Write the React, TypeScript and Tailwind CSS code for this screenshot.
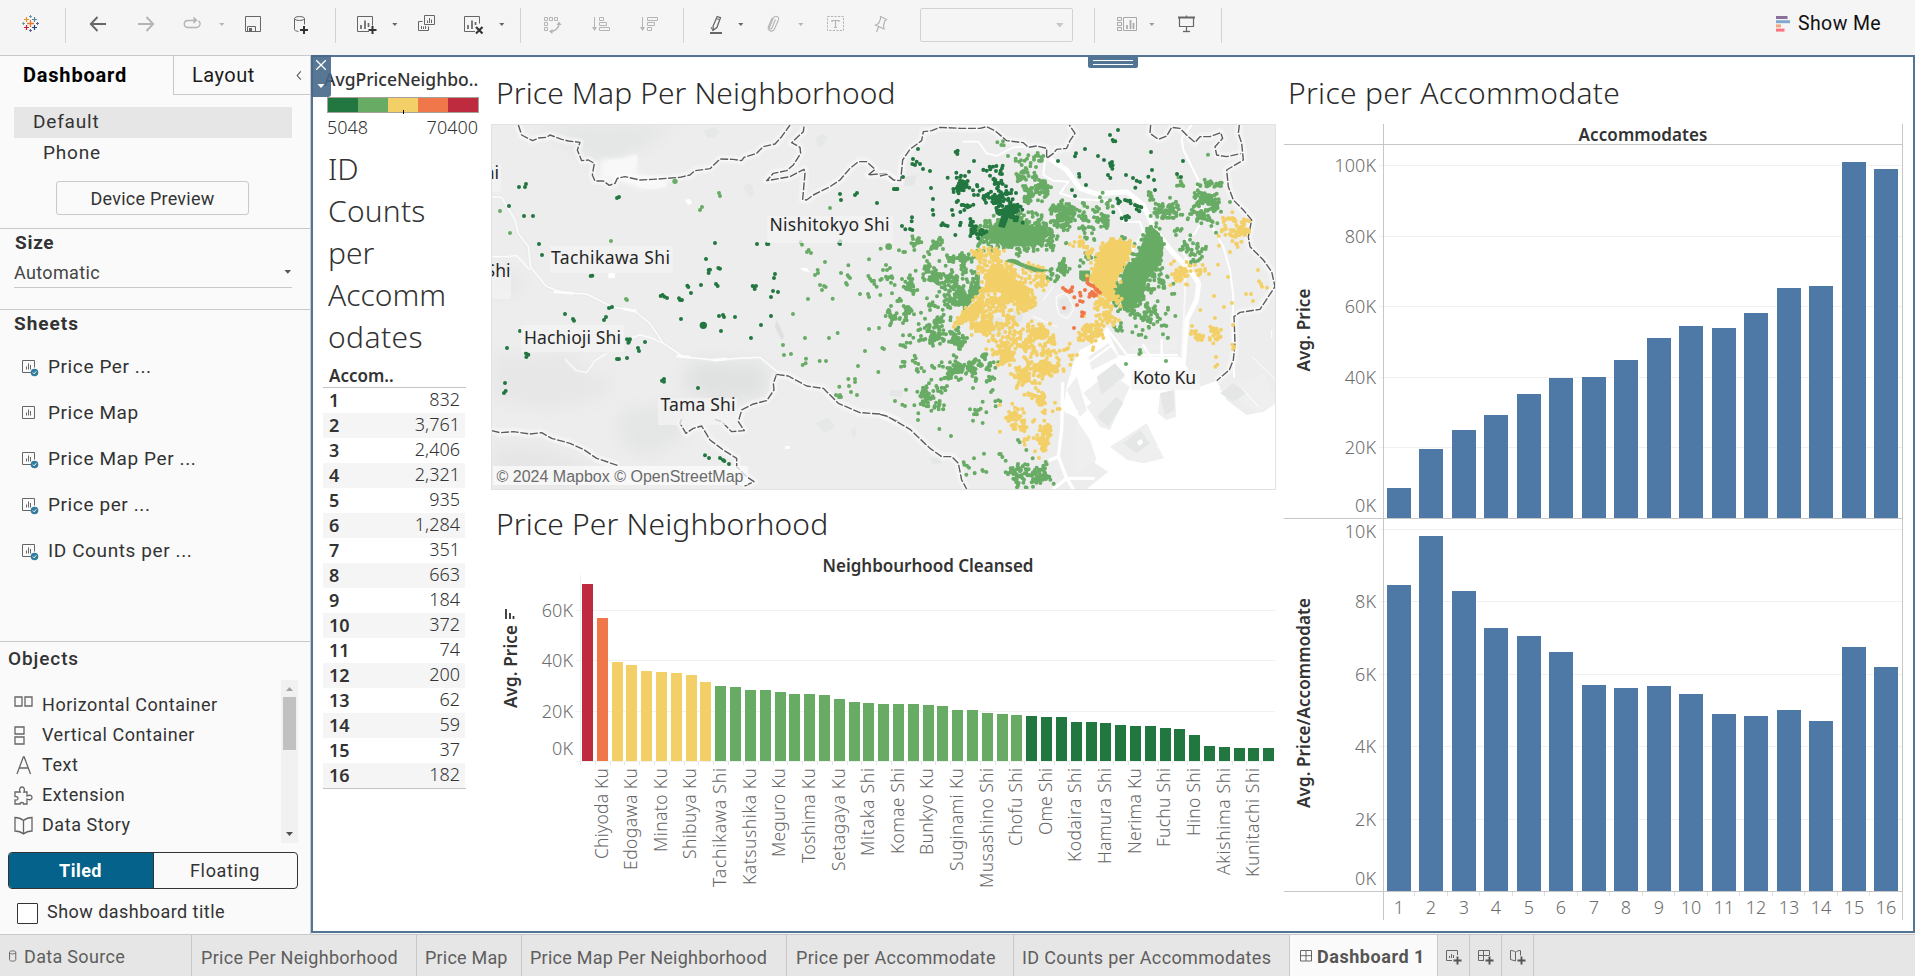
import React from "react";

const DARK = "#22763f";
const GREEN = "#68ab65";
const YELLOW = "#f3d067";
const ORANGE = "#f0774a";
const RED = "#be2a3e";
const BLUE = "#4e79a7";

/* ---------- toolbar ---------- */

function Icon({ className = "", children, color = "#666" }: { className?: string; children: React.ReactNode; color?: string }) {
  return (
    <svg viewBox="0 0 24 24" className={`h-6 w-6 shrink-0 ${className}`} fill="none" stroke={color} strokeWidth="1">
      {children}
    </svg>
  );
}

function Caret({ className = "", color = "#666" }: { className?: string; color?: string }) {
  return (
    <svg viewBox="0 0 8 24" className={`h-6 w-2 shrink-0 ${className}`}>
      <path d="M1.2 11h5.2L3.8 14z" fill={color} />
    </svg>
  );
}

function Sep({ className = "" }: { className?: string }) {
  return <div className={`mt-[3px] h-[35px] w-px shrink-0 bg-[#d2d2d2] ${className}`} />;
}

const LIGHT = "#b4b4b4";

function Toolbar() {
  return (
    <header className="flex h-[55px] w-full items-start bg-[#f5f5f5]">
      <div className="flex h-12 grow items-center">
        <Icon className="ml-[18px]">
          <path d="M12.500 8v7M9 11.500h7" stroke="#e8762c" strokeWidth="1.300" />
          <path d="M8.500 5v5M6 7.500h5" stroke="#eb912b" strokeWidth="1.200" />
          <path d="M16.500 5v5M14 7.500h5" stroke="#59879b" strokeWidth="1.200" />
          <path d="M8.500 13v5M6 15.500h5" stroke="#c72035" strokeWidth="1.200" />
          <path d="M16.500 13v5M14 15.500h5" stroke="#1f457e" strokeWidth="1.200" />
          <path d="M12.500 3v3M11 4.500h3M5.500 10v3M4 11.500h3" stroke="#7099a6" />
          <path d="M12.500 17v3M11 18.500h3M19.500 10v3M18 11.500h3" stroke="#5b6591" />
        </Icon>
        <Sep className="ml-[23px]" />
        <Icon className="ml-5"><path d="M20 12H5M11.500 5L4.800 12l6.700 7" strokeWidth="1.900" /></Icon>
        <Icon className="ml-6" color={LIGHT}><path d="M4 12h15M12.500 5l6.700 7-6.700 7" strokeWidth="1.900" /></Icon>
        <Icon className="ml-[22px]" color={LIGHT}>
          <path d="M14 8.500H7a3.600 3.600 0 0 0 0 7h10a3.600 3.600 0 0 0 1.400-6.600" strokeWidth="1.300" />
          <path d="M13.500 4.500v7.500l4-3.800z" fill={LIGHT} stroke="none" />
        </Icon>
        <Caret className="ml-[14px]" color={LIGHT} />
        <Icon className="ml-[15px]">
          <path d="M4.500 4.500h15v15h-15z" />
          <path d="M6.500 19.500v-5h8v5" />
          <path d="M8 16h3v3H8z" fill="#666" stroke="none" />
        </Icon>
        <Icon className="ml-6">
          <ellipse cx="10.500" cy="6.500" rx="5" ry="2" />
          <path d="M5.500 6.500v11c0 1 1.500 1.600 4 1.900M15.500 6.500v6" />
          <path d="M15 14v8M11 18h8" stroke="#333" strokeWidth="2" />
        </Icon>
        <Sep className="ml-[22px]" />
        <Icon className="ml-[18px]">
          <path d="M15 19.500H3.500v-15h15v9" />
          <path d="M7 17v-4M11 17V8.500M14.500 15v-4" strokeWidth="1.700" />
          <path d="M18.500 14v8M14.500 18h8" stroke="#333" strokeWidth="2" />
        </Icon>
        <Caret className="ml-[13px]" />
        <Icon className="ml-[15px]">
          <path d="M10.500 3.500h10v9h-10z" />
          <path d="M8.500 9.500h-4v9h10v-4" />
          <path d="M13.500 11V8.500M15.500 11V6M17.500 11V7.500M7.500 17v-3M9.500 17v-2.500M11.500 17v-3" />
        </Icon>
        <Icon className="ml-6">
          <path d="M13 19.500H2.500v-15h15v7" />
          <path d="M6 17v-4M10 17V8.500M13.500 13v-3" strokeWidth="1.700" />
          <path d="M14 15l6.500 6.500M20.500 15L14 21.500" stroke="#333" strokeWidth="2.100" />
        </Icon>
        <Caret className="ml-3" />
        <Sep className="ml-[14px]" />
        <Icon className="ml-[19px]" color={LIGHT}>
          <path d="M4.500 5.500h3v3h-3zM9.500 5.500h3v3h-3zM14.500 5.500h3v3h-3zM4.500 10.500h3v3h-3zM4.500 15.500h3v3h-3z" />
          <path d="M19 11.500c0 4-3 7.500-8 8" strokeWidth="1.400" />
          <path d="M16.500 13l2.500-3.500 2.500 3.500zM12.500 17l-3.500 2.500 3.500 2.500z" fill={LIGHT} stroke="none" />
        </Icon>
        <Icon className="ml-6" color={LIGHT}>
          <path d="M6.500 5v12" />
          <path d="M4 15h5l-2.500 4z" fill={LIGHT} stroke="none" />
          <path d="M11.500 5.500h4v3h-4zM11.500 10.500h7v3h-7zM11.500 15.500h10v3h-10z" />
        </Icon>
        <Icon className="ml-[25px]" color={LIGHT}>
          <path d="M5.500 5v12" />
          <path d="M3 15h5l-2.500 4z" fill={LIGHT} stroke="none" />
          <path d="M10.500 5.500h10v3h-10zM10.500 10.500h7v3h-7zM10.500 15.500h4v3h-4z" />
        </Icon>
        <Sep className="ml-[22px]" />
        <Icon className="ml-5">
          <path d="M13.200 4.500l3.300 1.200-3.600 9.800-3.600 2.500-.2-4z" strokeWidth="1.300" />
          <path d="M12.300 6.500l3.300 1.200" />
          <path d="M7 15l2 4" />
          <path d="M6 21h12" strokeWidth="2" />
        </Icon>
        <Caret className="ml-[9px]" />
        <Icon className="ml-4" color={LIGHT}>
          <path d="M14.500 7.500l-3.600 8.500c-.8 1.800-3 1-2.300-.9l3.700-9c1.500-3.300 6.300-1.700 5.200 1.600l-4 9.300c-1.700 3.600-7.500 2.200-6-2.500l3.700-8.500" strokeWidth="1.100" />
        </Icon>
        <Caret className="ml-3" color={LIGHT} />
        <Icon className="ml-[19px]" color={LIGHT}>
          <path d="M3.500 4.500h16v14h-16z" strokeDasharray="2.200 1.300" />
          <path d="M8 10V8.500h7V10M11.500 8.500v7M10 15.500h3" strokeWidth="1.200" />
        </Icon>
        <Icon className="ml-[21px]" color={LIGHT}>
          <path d="M11.500 4.500l6 3-1.500 1-1.500 5 .5 3.500-8.500-4 3-1.500 2-4.500zM9.500 15l-2 5" strokeWidth="1.200" />
        </Icon>
        <div className="ml-[27px] mt-[2px] flex h-[34px] w-[153px] shrink-0 items-center justify-end rounded-[2px] border border-[#d2d2d2] pr-2">
          <svg viewBox="0 0 8 6" className="h-[6px] w-2"><path d="M0 1h7.500L3.800 5.500z" fill="#c8c8c8" /></svg>
        </div>
        <Sep className="ml-[21px]" />
        <Icon className="ml-5" color="#a8a8a8">
          <path d="M2.500 5.500h4v3h-4zM2.500 10.500h4v3h-4zM2.500 15.500h4v3h-4zM8.500 5.500h13v13h-13z" />
          <path d="M12 17v-4M15.500 17V8M18.500 17v-6" strokeWidth="1.700" />
        </Icon>
        <Caret className="ml-[9px]" color="#999" />
        <Icon className="ml-[19px]">
          <path d="M3 5.500h17" strokeWidth="2" />
          <path d="M4.500 6v8.500h14V6M11.500 14.500v5M11.500 3.500V5" strokeWidth="1.200" />
          <path d="M8 19.500h7" strokeWidth="1.300" />
        </Icon>
        <Sep className="ml-[22px]" />
      </div>
      <button className="flex h-12 w-[139px] items-center gap-[7px]">
        <svg viewBox="0 0 15 16" className="mt-[-1px] h-4 w-[15px]">
          <path d="M0 0h11.500v3H0z" fill="#8a7099" />
          <path d="M0 4.200h14v3H0z" fill="#83a8ce" />
          <path d="M0 8.400h5v3H0z" fill="#f3a77c" />
          <path d="M0 12.600h8.500v3H0z" fill="#fb737e" />
        </svg>
        <span className="text-[19.500px] font-normal tracking-[0.4px] text-[#111]">Show Me</span>
      </button>
    </header>
  );
}

/* ---------- sidebar ---------- */

function SheetIcon({ used }: { used: boolean }) {
  return (
    <svg viewBox="0 0 18 18" className="h-[18px] w-[18px] shrink-0" fill="none" stroke="#666">
      <path d={used ? "M9 12.500H.5V.5h12v7" : "M.5.5h12v12H.5z"} />
      <path d="M4.500 9.500V6.500M6.500 9.500V3.500M8.500 9.500V5" />
      {used && (
        <g>
          <circle cx="12.500" cy="12.500" r="3.800" fill="#317b9d" stroke="none" />
          <path d="M10.800 12.500l1.300 1.300 2.100-2.500" stroke="#fff" />
        </g>
      )}
    </svg>
  );
}

const SHEETS = [
  { name: "Price Per ...", used: true },
  { name: "Price Map", used: false },
  { name: "Price Map Per ...", used: true },
  { name: "Price per ...", used: true },
  { name: "ID Counts per ...", used: true },
];

const OBJECTS: { name: string; icon: React.ReactNode }[] = [
  { name: "Horizontal Container", icon: <path d="M1 1h7v9H1zM11 1h7v9h-7z" /> },
  { name: "Vertical Container", icon: <path d="M1 1h9v7H1zM1 11h9v7H1z" /> },
  { name: "Text", icon: <path d="M3 18L9.300 1h.9L16.500 18M5.300 12h9" /> },
  {
    name: "Extension",
    icon: (
      <path d="M1 8.500V6h5.200c-1.200-2-.6-5 1.800-5s3 3 1.800 5H13v4c3-1.500 5-.5 5 1.500s-2 3-5 1.500V18H9.500c.5-2-4-2-3.500 0H1v-4c4 .8 4-4 0-3.500z" />
    ),
  },
  { name: "Data Story", icon: <path d="M1 1.500c3 0 5.500.5 8.500 3 3-2.500 5.500-3 8.500-3v13.500c-3 0-5.500.5-8.500 3-3-2.500-5.500-3-8.500-3zM9.500 4.500V18" /> },
];

function Sidebar() {
  return (
    <aside className="flex w-[311px] shrink-0 flex-col border-r border-t border-[#c9c9c9] bg-[#fafafa] text-[#333]">
      <div className="flex h-[39px]">
        <div className="flex h-[37px] w-[173px] items-center pl-[23px] text-[20px] font-bold tracking-[0.8px] text-black">Dashboard</div>
        <div className="flex grow items-center justify-between border-b border-l border-[#c9c9c9] pl-[18px] pr-2 text-[20px] tracking-[0.5px] text-[#1a1a1a]">
          Layout
          <svg viewBox="0 0 6 10" className="h-[9px] w-[6px]" fill="none" stroke="#555" strokeWidth="1.200"><path d="M5 .5L1 5l4 4.500" /></svg>
        </div>
      </div>
      <div className="ml-[14px] mt-3 flex h-[31px] w-[278px] items-center bg-[#e6e6e6] pl-[19px] text-[19px] tracking-[0.8px]">Default</div>
      <div className="flex h-8 items-center pb-[2px] pl-[43px] text-[19px] tracking-[0.8px]">Phone</div>
      <button className="ml-14 mt-[11px] flex h-[34px] w-[193px] items-center justify-center rounded-[3px] border border-[#c9c9c9] text-[18px] tracking-[0.24px]">
        Device Preview
      </button>
      <section className="mt-[13px] flex h-[81px] flex-col border-t border-[#c9c9c9]">
        <h2 className="h-[29px] pl-[15px] text-[19px] font-bold leading-[27px] tracking-[0.7px]">Size</h2>
        <div className="ml-[14px] flex h-[30px] w-[278px] items-center justify-between border-b border-[#c9c9c9] pb-[1px] text-[18px] tracking-[0.35px] text-[#444]">
          Automatic
          <svg viewBox="0 0 8 4" className="h-1 w-[8px]"><path d="M.5 0h6.500L3.800 3.800z" fill="#555" /></svg>
        </div>
      </section>
      <section className="flex h-[332px] flex-col border-t border-[#c9c9c9]">
        <h2 className="h-[34px] pl-[14px] text-[19px] font-bold leading-[28px] tracking-[1px]">Sheets</h2>
        {SHEETS.map((s) => (
          <div key={s.name} className="flex h-[46px] items-center gap-2 pl-[22px] text-[19px] tracking-[0.6px]">
            <span className="mt-[3px]"><SheetIcon used={s.used} /></span>
            {s.name}
          </div>
        ))}
      </section>
      <section className="flex flex-col border-t border-[#c9c9c9]">
        <h2 className="h-[38px] pl-2 text-[19px] font-medium leading-[33px] tracking-[0.9px]">Objects</h2>
        <div className="flex h-[163px]">
          <ul className="w-[281px] pt-[10px]">
            {OBJECTS.map((o) => (
              <li key={o.name} className="flex h-[30px] items-center gap-[9px] pl-[14px] text-[18px] tracking-[0.55px]">
                <svg viewBox="0 0 19 19" className="h-[19px] w-[19px]" fill="none" stroke="#666" strokeWidth="1.300">{o.icon}</svg>
                <span className="pb-[2px]">{o.name}</span>
              </li>
            ))}
          </ul>
          <div className="flex w-[17px] flex-col items-center bg-[#f1f1f1]">
            <svg viewBox="0 0 17 17" className="h-[17px] w-[17px]"><path d="M5 11h7L8.500 7z" fill="#a3a3a3" /></svg>
            <div className="h-[53px] w-[13px] bg-[#c1c1c1]" />
            <svg viewBox="0 0 17 17" className="mt-auto h-[17px] w-[17px]"><path d="M5 6h7l-3.500 4z" fill="#505050" /></svg>
          </div>
        </div>
      </section>
      <div className="ml-2 mt-[9px] flex h-[37px] w-[290px] overflow-hidden rounded-[4px] border border-[#333] text-[18px]">
        <div className="m-[-1px] flex w-[146px] items-center justify-center border-r border-[#333] bg-[#05628a] font-bold tracking-[0.49px] text-white">Tiled</div>
        <div className="flex grow items-center justify-center tracking-[0.66px]">Floating</div>
      </div>
      <label className="ml-[17px] mt-[14px] flex items-center gap-[9px] text-[18px] tracking-[0.46px]">
        <span className="h-[21px] w-[21px] rounded-[1px] border border-[#333] bg-white" />
        <span className="-mt-[4px] leading-[21px]">Show dashboard title</span>
      </label>
    </aside>
  );
}

/* ---------- legend and counts table ---------- */

const COUNTS = ["832", "3,761", "2,406", "2,321", "935", "1,284", "351", "663", "184", "372", "74", "200", "62", "59", "37", "182"];

function CountsPanel() {
  return (
    <div className="flex w-[178px] shrink-0 flex-col font-['Noto_Sans',sans-serif] text-[#333]">
      <div className="mt-[12px] h-[28px] whitespace-nowrap pl-[11px] text-[17.500px] font-medium leading-[21px]">AvgPriceNeighbo..</div>
      <div className="relative ml-[14px] flex h-[16px] w-[152px] border border-[#a8a29a]">
        <div className="grow bg-[#22763f]" />
        <div className="grow bg-[#68ab65]" />
        <div className="grow bg-[#f3d067]" />
        <div className="grow bg-[#f0774a]" />
        <div className="grow bg-[#be2a3e]" />
        <div className="absolute left-[75px] top-[12px] h-[4px] w-px bg-black" />
      </div>
      <div className="flex h-[33px] justify-between pl-[14px] pr-[13px] text-[18px] font-light leading-[29px]">
        <span>5048</span>
        <span>70400</span>
      </div>
      <h2 className="w-[150px] pl-[15px] pt-[2px] text-[30px] font-light leading-[42px]">
        ID<br />
        <span className="tracking-[0.2px]">Counts</span><br />
        per<br />
        Accomm<br />
        <span className="tracking-[0.4px]">odates</span>
      </h2>
      <div className="ml-[10px] mt-[6px] flex w-[143px] flex-col border-b border-[#c4c4c4]">
        <div className="h-[24px] border-b border-[#c4c4c4] pl-[6px] text-[17px] font-semibold leading-[23px]">Accom..</div>
        {COUNTS.map((v, i) => (
          <div key={i} className={`flex h-[25px] w-[142px] items-center justify-between pl-[6px] pr-[5px] text-[18px] leading-[24px] ${i % 2 ? "bg-[#f5f5f5]" : ""}`}>
            <span className="pb-[1px] text-[18px] font-semibold">{i + 1}</span>
            <span className="pb-[3px] font-light">{v}</span>
          </div>
        ))}
      </div>
    </div>
  );
}

/* ---------- map ---------- */

function lcg(seed: number) {
  let s = seed;
  return () => {
    s = (s * 1664525 + 1013904223) % 4294967296;
    return s / 4294967296;
  };
}

function inside(poly: number[], x: number, y: number) {
  let hit = false;
  for (let i = 0, j = poly.length - 2; i < poly.length; j = i, i += 2) {
    const [xi, yi, xj, yj] = [poly[i], poly[i + 1], poly[j], poly[j + 1]];
    if (yi > y !== yj > y && x < ((xj - xi) * (y - yi)) / (yj - yi) + xi) hit = !hit;
  }
  return hit;
}

/* Random points inside a polygon; `clump` is the share of points that sit next to an earlier one. */
function scatter(poly: number[], n: number, clump: number, seed: number) {
  const r = lcg(seed);
  const xs = poly.filter((_, i) => i % 2 === 0);
  const ys = poly.filter((_, i) => i % 2 === 1);
  const [x0, x1, y0, y1] = [Math.min(...xs), Math.max(...xs), Math.min(...ys), Math.max(...ys)];
  const pts: [number, number][] = [];
  let guard = 0;
  while (pts.length < n && guard++ < n * 20) {
    let x: number, y: number;
    if (pts.length > 3 && r() < clump) {
      const p = pts[Math.floor(r() * pts.length)];
      x = p[0] + (r() + r() - 1) * 20;
      y = p[1] + (r() + r() - 1) * 20;
    } else {
      x = x0 + r() * (x1 - x0);
      y = y0 + r() * (y1 - y0);
      if (!inside(poly, x, y)) continue;
    }
    pts.push([Math.round(x), Math.round(y)]);
  }
  return pts.map(([x, y]) => `M${x} ${y}h0`).join("");
}

/* Points jittered along a polygon's outline, which roughens the edge of a dense area. */
function fringe(poly: number[], step: number, spread: number, seed: number) {
  const r = lcg(seed);
  let d = "";
  for (let i = 0; i < poly.length; i += 2) {
    const j = (i + 2) % poly.length;
    const len = Math.hypot(poly[j] - poly[i], poly[j + 1] - poly[i + 1]);
    for (let t = 0; t < len; t += step) {
      const x = poly[i] + ((poly[j] - poly[i]) * t) / len + (r() + r() - 1) * spread;
      const y = poly[i + 1] + ((poly[j + 1] - poly[i + 1]) * t) / len + (r() + r() - 1) * spread;
      d += `M${Math.round(x)} ${Math.round(y)}h0`;
    }
  }
  return d;
}

function dots(list: number[]) {
  let d = "";
  for (let i = 0; i < list.length; i += 2) d += `M${list[i]} ${list[i + 1]}h0`;
  return d;
}

const WEST_DARK = [
  117, 231, 138, 222, 135, 231, 87, 288, 132, 318, 159, 318, 177, 402, 186, 435, 411, 264, 417, 261, 332, 498, 337, 497, 705, 399, 831, 402, 861, 402, 865, 402,
  678, 447, 686, 480, 690, 479, 686, 489, 715, 474, 720, 476, 885, 492, 882, 504, 663, 525, 708, 522, 713, 528, 622, 527, 625, 531, 633, 549, 818, 528, 828, 528, 824, 537,
  879, 543, 894, 546, 873, 561, 542, 558, 548, 555, 553, 560, 561, 564, 597, 565, 600, 570, 606, 570, 387, 594, 396, 591, 255, 612, 279, 627, 282, 632, 378, 621, 372, 630, 603, 627,
  717, 618, 729, 615, 732, 621, 765, 621, 873, 618, 843, 645, 813, 684, 723, 663, 120, 663, 81, 714, 138, 730, 145, 734, 139, 741, 441, 688, 447, 695, 450, 688, 445, 698, 495, 696, 474, 714,
  477, 723, 411, 747, 417, 747, 441, 744, 75, 819, 72, 849, 77, 843, 546, 812, 552, 807, 552, 815, 654, 834, 675, 1036, 687, 1044, 720, 1044, 729, 1050, 733, 1053, 747, 1062,
  1080, 252, 1083, 270, 1131, 249, 1125, 255, 1191, 279, 1243, 237, 1251, 237, 1081, 394, 1080, 402, 1077, 398,
];
const WEST_GREEN = [
  60, 303, 90, 369, 393, 393, 438, 567, 441, 570, 717, 249, 720, 258, 666, 291, 660, 300, 1050, 294, 962, 396, 966, 404, 981, 426, 986, 420, 993, 429, 1035, 456, 1013, 480, 1014, 489,
  1005, 495, 1020, 525, 1032, 528, 1037, 531, 1026, 540, 984, 567, 1058, 566, 1105, 466, 1083, 489, 1106, 500, 1101, 524, 1098, 519, 1110, 504, 1103, 496, 1167, 448, 1165, 498, 1170, 506, 1175, 513, 1183, 522, 1190, 530,
  1182, 512, 1140, 552, 1164, 552, 1167, 561, 1201, 555, 939, 612, 1073, 669, 1047, 684, 975, 684, 909, 705, 912, 735, 933, 732, 978, 746, 977, 760, 968, 765, 1019, 753, 1038, 753, 1167, 657, 1197, 654,
  1155, 723, 1207, 714, 1212, 717, 1134, 768, 1195, 786, 1105, 807, 1125, 807, 1125, 816, 1107, 828, 1078, 830, 1113, 846, 1068, 855, 1080, 855, 1077, 861, 1083, 861, 1131, 855, 1245, 873,
  1233, 588, 1228, 604, 1230, 611, 1236, 630, 1233, 640, 1218, 465, 1230, 474, 1221, 480, 1209, 480, 1218, 500, 1228, 502,
];
const EAST_DARK = [
  114, 117, 99, 147, 105, 165, 120, 162, 97, 162, 110, 155, 129, 177, 150, 183, 69, 201, 227, 126, 233, 122, 232, 132, 282, 153, 153, 234, 159, 267, 158, 300, 160, 314, 42, 237, 52, 237, 96, 322, 95, 334,
  90, 357, 97, 360, 66, 348, 76, 358, 188, 340, 195, 346, 184, 346, 226, 375, 203, 348, 714, 60, 690, 75, 698, 90, 706, 94, 700, 94, 615, 117, 588, 130, 585, 139, 534, 153, 654, 138, 672, 150, 696, 156, 692, 168, 697, 176, 690, 160, 698, 166, 684, 195,
  691, 204, 738, 195, 759, 204, 770, 212, 780, 216, 766, 233, 813, 126, 816, 180, 805, 200, 822, 210, 825, 240, 909, 153, 891, 192, 903, 201, 597, 192, 598, 200, 618, 225, 576, 240, 585, 258,
  712, 266, 716, 272, 720, 275, 735, 270, 742, 272, 750, 272, 715, 280, 752, 280, 765, 285, 772, 288, 780, 290, 784, 292, 770, 298, 778, 304, 700, 307, 725, 325, 735, 320, 742, 318, 747, 322, 738, 330, 777, 303,
];
const ORANGE_PTS = [
  549, 534, 556, 540, 560, 543, 568, 546, 572, 540, 577, 532, 575, 543, 583, 562, 600, 548, 602, 557, 615, 540, 622, 508, 622, 518, 626, 522, 632, 525, 640, 528, 646, 536, 650, 541, 655, 545, 660, 548, 640, 550, 630, 552, 648, 555, 600, 573,
  608, 575, 591, 585, 552, 594, 606, 607, 612, 609, 606, 618, 582, 654, 628, 560, 652, 540, 636, 546, 632, 556, 642, 558,
];
const YELLOW_PTS = [
  1057, 307, 1017, 407, 1050, 426, 1014, 464, 1044, 501, 1134, 480, 1137, 514, 1143, 522, 1146, 530, 1161, 533, 1098, 552, 1113, 552, 1119, 573, 1002, 558, 1056, 579, 1032, 591, 961, 600, 1005, 624, 1059, 645,
  936, 648, 1008, 741, 1012, 764, 1006, 770, 1057, 704, 1062, 710, 1059, 717, 873, 462, 882, 454, 945, 465, 968, 465, 987, 492, 612, 618, 640, 712, 638, 720, 591, 735, 360, 885, 360, 965,
  372, 422, 465, 1024, 477, 1044, 490, 1010, 497, 1020, 490, 1022, 606, 398, 612, 410, 600, 405,
];

const BORDERS_WEST = [
  "M115 45L125 75 158 92 175 84 200 82 210 75 245 88 265 93 300 97 292 120 305 152 325 150 343 160 337 195 345 213 370 213 388 226 405 220 412 205 435 200 480 210 520 208 560 205 600 202 630 195 645 182 690 176 720 147 760 148 785 152 792 142 830 130 850 110 885 102 905 80 930 45",
  "M972 50L970 65 935 98 960 112 962 130 940 165 920 182 880 190 860 212 930 200 972 178 975 190 968 268 980 270 1000 255 1050 230 1080 210 1110 175 1135 155 1160 155 1185 178 1165 195 1215 190 1245 210",
  "M35 962L60 968 100 965 150 972 185 968 215 985 270 1000 310 1018 350 1045 415 1067",
  "M890 793L880 820 882 840 860 872 820 882 785 900 775 935 793 962 755 965 725 935 705 928",
  "M605 928L600 940 618 970 640 955 665 948 690 990 730 1020 770 1045 770 1070 800 1100 822 1115 790 1130",
  "M890 793L925 798 980 828 1030 835 1075 880 1140 908 1200 912 1260 935",
];
const BORDERS_EAST = [
  "M0 198L20 193 40 210 62 212 68 150 90 118 125 92 130 65 155 62 180 52 240 55 300 55 320 50 345 62 380 92 430 98 445 112 470 108 500 115 500 145 520 130 530 118 560 115 570 92 585 70 568 45",
  "M812 45L810 70 835 88 860 78 875 52 900 55 925 80 945 97 960 80 990 80 1022 68 1028 85 1005 110 1010 135 1040 140 1085 130",
  "M1078 45L1075 70 1085 100 1090 150 1040 180 1045 230 1060 270 1090 300 1115 330 1105 380 1110 410 1150 450 1175 485 1185 530 1140 598 1080 607 1062 620 1065 700 1060 750 1048 780 1010 812",
  "M0 913L20 918 90 958 150 1015 185 1040 215 1040 235 1060 245 1110 260 1137",
];

function Border({ d }: { d: string }) {
  return (
    <g fill="none" strokeLinejoin="round">
      <path d={d} stroke="#fff" strokeOpacity=".3" strokeWidth="26" />
      <path d={d} stroke="#fff" strokeOpacity=".5" strokeWidth="12" />
      <path d={d} stroke="#5c5c5c" strokeWidth="4.200" strokeDasharray="24 5" />
    </g>
  );
}

const G_POLY = {
  core: [300, 385, 335, 350, 365, 325, 420, 322, 450, 350, 500, 350, 510, 375, 470, 405, 440, 410, 400, 408, 360, 392],
  east: [810, 345, 840, 370, 850, 430, 835, 470, 800, 510, 790, 560, 745, 592, 700, 560, 722, 520, 730, 480, 770, 440, 790, 390],
};
const Y_POLY = {
  north: [690, 388, 755, 395, 752, 430, 728, 470, 712, 510, 690, 550, 665, 560, 655, 535, 628, 510, 645, 460, 655, 430, 672, 405],
  west: [320, 492, 380, 480, 410, 510, 460, 540, 440, 545, 470, 580, 430, 592, 390, 560, 350, 545, 310, 550],
  wedge: [308, 550, 314, 585, 290, 632, 250, 635, 220, 648, 245, 610, 285, 575],
};

function DotLayer({ color, d }: { color: string; d: string }) {
  return <path d={d} stroke={color} strokeWidth="12" strokeLinecap="round" fill="none" />;
}

const GREEN_AREAS = [
  scatter([275, 360, 350, 310, 450, 300, 520, 340, 520, 400, 480, 420, 380, 420, 290, 410], 260, 0.4, 3),
  scatter([405, 130, 490, 125, 495, 200, 510, 240, 550, 290, 600, 300, 590, 350, 520, 340, 450, 310, 430, 240, 410, 180], 190, 0.6, 7),
  scatter([520, 300, 640, 285, 690, 290, 680, 380, 670, 405, 610, 400, 560, 370, 520, 350], 170, 0.7, 11),
  scatter([815, 290, 890, 275, 910, 320, 860, 330, 825, 315], 75, 0.7, 12),
  scatter([860, 390, 900, 340, 940, 290, 990, 240, 1020, 280, 960, 330, 900, 385], 150, 0.75, 13),
  scatter([870, 200, 930, 200, 930, 250, 1000, 170, 1035, 165, 1025, 240, 980, 280, 890, 250], 32, 0.5, 14),
  scatter([920, 390, 980, 400, 975, 460, 940, 455, 915, 430], 42, 0.6, 15),
  scatter([700, 540, 800, 480, 880, 500, 890, 560, 800, 620, 700, 600], 140, 0.65, 16),
  scatter([690, 600, 880, 590, 900, 680, 850, 700, 770, 690, 700, 665], 52, 0.5, 17),
  scatter([205, 430, 300, 420, 305, 520, 250, 600, 200, 580], 180, 0.6, 18),
  scatter([0, 400, 200, 390, 215, 560, 180, 560, 0, 520], 110, 0.75, 19),
  scatter([130, 470, 200, 460, 210, 560, 140, 540], 80, 0.7, 20),
  scatter([0, 540, 230, 540, 200, 700, 20, 720], 85, 0.6, 21),
  scatter([140, 620, 220, 600, 260, 690, 240, 720, 150, 700], 130, 0.7, 22),
  scatter([200, 780, 320, 730, 335, 755, 230, 810, 205, 810], 110, 0.6, 23),
  scatter([40, 740, 380, 760, 400, 860, 350, 900, 330, 1000, 250, 970, 200, 900, 40, 890], 130, 0.75, 24),
  scatter([450, 1060, 500, 1045, 500, 1130, 400, 1137, 400, 1080], 110, 0.7, 25),
  scatter([250, 1000, 480, 980, 470, 1060, 300, 1137, 250, 1100], 26, 0.6, 26),
  scatter([505, 400, 620, 400, 620, 510, 510, 510], 60, 0.8, 27),
  fringe(G_POLY.core, 8, 18, 61),
  fringe(G_POLY.east, 7, 20, 62),
];
const DARK_AREAS = [
  scatter([330, 210, 410, 240, 430, 310, 370, 340, 330, 290], 110, 0.65, 31),
  scatter([195, 170, 260, 200, 330, 240, 330, 270, 260, 250, 200, 220], 58, 0.7, 32),
  scatter([210, 270, 330, 250, 370, 340, 270, 380, 210, 340], 50, 0.6, 33),
  scatter([300, 165, 370, 160, 380, 220, 320, 210], 18, 0.6, 34),
];
const YELLOW_AREAS = [
  scatter([262, 405, 330, 415, 400, 460, 515, 485, 500, 530, 320, 510, 285, 460], 210, 0.5, 41),
  scatter([300, 560, 380, 560, 470, 570, 460, 600, 350, 610, 300, 620], 90, 0.5, 42),
  scatter([270, 640, 400, 620, 400, 760, 320, 740, 275, 690], 150, 0.75, 43),
  scatter([360, 690, 400, 690, 405, 760, 370, 760], 70, 0.6, 44),
  scatter([395, 630, 510, 630, 515, 690, 540, 720, 575, 660, 580, 780, 500, 790, 400, 700], 250, 0.7, 45),
  scatter([385, 760, 500, 740, 490, 880, 410, 860], 130, 0.75, 46),
  scatter([395, 880, 540, 870, 520, 1000, 430, 1000, 395, 940], 125, 0.75, 47),
  scatter([480, 950, 515, 950, 510, 1025, 485, 1020], 28, 0.6, 48),
  scatter([635, 545, 695, 555, 700, 610, 660, 690, 595, 700, 595, 655, 650, 630], 180, 0.6, 49),
  scatter([1020, 345, 1055, 315, 1108, 325, 1085, 410, 1025, 380], 80, 0.6, 50),
  scatter([885, 460, 925, 480, 925, 530, 885, 515], 45, 0.7, 51),
  scatter([945, 470, 985, 475, 980, 495, 950, 495], 9, 0.4, 52),
  scatter([950, 680, 975, 675, 975, 698, 955, 698], 18, 0.7, 53),
  scatter([985, 660, 1025, 650, 1025, 700, 990, 700], 26, 0.7, 54),
  scatter([595, 395, 620, 395, 655, 420, 625, 450, 605, 445], 26, 0.6, 55),
  fringe(Y_POLY.north, 9, 14, 63),
  fringe(Y_POLY.west, 9, 18, 64),
  fringe(Y_POLY.wedge, 9, 12, 65),
];

function MapView() {
  return (
    <svg viewBox="0 0 785 366" className="h-[366px] w-[785px] shrink-0">
      <defs>
        <filter id="soft" x="-20%" y="-20%" width="140%" height="140%"><feGaussianBlur stdDeviation="26" /></filter>
        <filter id="soft2" x="-20%" y="-20%" width="140%" height="140%"><feGaussianBlur stdDeviation="8" /></filter>
        <clipPath id="frame"><path d="M0 0h785v366H0z" /></clipPath>
      </defs>
      <g clipPath="url(#frame)">
        <path d="M0 0h785v366H0z" fill="#ededed" />
        {/* west half terrain and rivers */}
        <g transform="translate(-11 -14) scale(.33333)">
          <g filter="url(#soft)" fill="#e4e5e5">
            <path d="M150 45H600L520 90 460 130 380 170 310 140 250 90z" />
            <path d="M35 480L120 500 130 540 35 560z" fill="#e5e5e5" />
            <path d="M35 720L150 740 260 720 330 790 420 810 350 870 200 900 35 870z" fill="#e7e7e7" />
            <path d="M640 750L860 760 860 860 700 880 600 820z" fill="#e0e1e1" />
            <path d="M420 900L640 880 600 990 500 1040 420 1000z" />
            <path d="M35 1000L200 1010 350 1080 300 1137H35z" fill="#e6e6e6" />
          </g>
          <path d="M360 150l60-4 50-14v60l90 18v20l-80 6-60-24-60-6z" filter="url(#soft2)" fill="#f8f8f8" />
          <path d="M380 150l50-2 40-14v34l-40 6zM480 215l80 5v10l-50 8-50-12z" fill="#f8f8f8" />
          <g fill="#e6e8e8">
            <path d="M670 62l30-12 20 14-14 16-24 4zM1005 85l20-15 20 12-16 26-14 4zM790 235l10-16 18 8 4 28-14 6zM1005 940l40-18 20 30-30 16zM1110 965l14-16 8 20-10 14z" />
            <path d="M890 630l24 50-10 10-20-40z" fill="#dfe1e1" />
          </g>
          <g fill="none" stroke="#fcfcfc" strokeLinejoin="round">
            <path d="M35 260L65 262 105 330 115 370 145 410 152 472 200 530 250 548 320 552 400 592 460 600 510 640 550 700 610 740 700 750 780 745 840 742 895 788" stroke="#e9ebeb" strokeWidth="14" />
            <path d="M35 260L65 262 105 330 115 370 145 410 152 472 200 530 250 548 320 552 400 592 460 600 510 640 550 700 610 740 700 750 780 745 840 742 895 788" strokeWidth="4.500" />
            <path d="M220 545l60 5M430 596l40 8M590 738l40 4M700 750l40-3" strokeWidth="9" />
            <path d="M35 440L80 440 110 437 150 480M255 748L290 782 320 788 345 752 380 730M440 690L480 675 510 682 560 705" strokeWidth="4" />
          </g>
          <path d="M960 475l20-2 10 14-20-4zM615 270l14-4 8 12-12 8zM915 1008h14v8h-14zM385 490h20v14h-20z" fill="#fff" />
        </g>
        {/* east half: bay, islands, rivers */}
        <g transform="translate(389 -14) scale(.33333)">
          <g fill="#fff">
            <path d="M1188 880L1150 905 1100 915 1040 870 1010 812 960 830 900 740 760 740 715 735 680 655 640 700 600 720 580 760 560 830 548 900 590 925 620 1000 645 1060 685 1085 620 1137H1188z" />
          </g>
          <g fill="#efefef">
            <path d="M625 740l60-40 30 40-80 40zM610 850l90-75 35 25-95 85zM620 890l100-80 30 20-60 130-30-10zM840 850l45-10 3 80-30 10-24-20zM690 1010l110-70 52 105-60 15-50-10zM1012 840l60-20 80-30 36 90-60 30-50-40-50-30zM745 705l90-5 10 20-90 4zM850 690l40-10v40h-40z" />
            <path d="M560 840l40 80 20-20-30-100zM590 930l40 60 20 60-60 40z" />
          </g>
          <g fill="#e5e7e7">
            <path d="M650 800l55-40 30 35-70 60zM840 850l40-10 4 60-30 16zM650 920l60-60 20 20-45 70zM730 1000l50-40 30 40-40 30zM1020 850l40-30 40 30-40 25z" />
          </g>
          <g fill="#fff"><path d="M770 995l15-8 4 12-12 8zM830 1010l10-6v12z" /></g>
          <g fill="none" stroke="#fff" strokeLinejoin="round" strokeLinecap="round">
            <path d="M515 150L560 180 600 235 650 252 740 245 790 285 825 360 880 430 930 480 956 520 950 570 920 630 910 760" strokeWidth="15" />
            <path d="M495 150L490 195 520 212 565 215 540 250 600 268 690 272 720 300 730 335 780 335 790 365 770 400 740 450" strokeWidth="6" />
            <path d="M935 45L905 85 910 120 955 210 945 260 985 330 1030 410 1050 480 1060 560 1058 640 1062 800" strokeWidth="6" />
            <path d="M250 95L295 95 320 130 350 138 400 112 460 108M960 340L945 370 905 400 910 430 930 460" strokeWidth="5" />
            <path d="M915 420V560L905 740" strokeWidth="6" stroke="#f8f8f8" />
            <path d="M680 655L760 760M790 705l30 50M845 690v50M740 735h150M600 740l60-50M620 760l70-50" strokeWidth="7" />
            <path d="M548 820L545 960 535 1040 560 1105H640M535 1040L510 1050M560 1105L520 1137M560 1105L580 1137M560 905h30" strokeWidth="10" />
            <path d="M1118 742L1185 808M1090 840L1135 890M1175 660v25" strokeWidth="3" />
            <path d="M530 560l25-12 15 20 12 30-20 28-25-12-8-30zM460 620l70 30M490 570l30-40" strokeWidth="3" />
          </g>
          <g fill="#e5e7e7">
            <path d="M535 570l25-12 15 25-10 30-25-5zM330 630l30-10 25 30-10 25-40 8zM70 200l40-5-8 30-28 6zM400 600l30 10-6 30-22-10z" />
            <path d="M30 840h40l-5 22-36-4zM150 1045l30-6 6 20-28 6z" />
          </g>
        </g>
        <g transform="translate(-11 -14) scale(.33333)">
          {BORDERS_WEST.map((d) => <Border key={d} d={d} />)}
        </g>
        <g transform="translate(389 -14) scale(.33333)">
          {BORDERS_EAST.map((d) => <Border key={d} d={d} />)}
        </g>
        <g transform="translate(-11 -14) scale(.33333)">
          <DotLayer color={DARK} d={dots(WEST_DARK)} />
          <DotLayer color={GREEN} d={dots(WEST_GREEN)} />
          <circle cx="670" cy="646" r="11" fill={DARK} />
          <circle cx="1226" cy="410" r="10" fill={GREEN} />
          <circle cx="585" cy="214" r="8" fill={GREEN} />
        </g>
        <g transform="translate(389 -14) scale(.33333)">
          <path d={`M${G_POLY.core.join(" ")}zM${G_POLY.east.join(" ")}z`} fill={GREEN} />
          <path d="M300 490L298 550 250 605 245 570 270 545z" fill={GREEN} />
          <path d="M375 452q25-14 50 6l60 18 24 4-20 10-30-4-50-22z" fill={GREEN} />
          <DotLayer color={GREEN} d={GREEN_AREAS.join("")} />
          <path d="M600 484h28v28h-20l-8-6z" fill={GREEN} stroke={GREEN} strokeWidth="5" strokeLinejoin="round" />
          <DotLayer color={GREEN} d={dots([352, 97, 369, 94, 364, 105, 371, 106, 384, 138, 984, 134, 738, 762, 858, 753, 780, 720, 782, 728, 778, 732, 1050, 276, 115, 910, 114, 930, 178, 957, 213, 978, 1008, 368, 726, 380, 735, 384, 731, 386, 813, 261])} />
          <path d="M380 292q35-25 38 12l-35 20-10 28-16-4 10-34-16-10z" fill={DARK} stroke={DARK} strokeWidth="4" strokeLinejoin="round" />
          <DotLayer color={DARK} d={dots(EAST_DARK)} />
          <DotLayer color={DARK} d={DARK_AREAS.join("")} />
          <path d={`M${Y_POLY.north.join(" ")}zM${Y_POLY.west.join(" ")}zM${Y_POLY.wedge.join(" ")}z`} fill={YELLOW} />
          <DotLayer color={YELLOW} d={YELLOW_AREAS.join("")} />
          <DotLayer color={YELLOW} d={dots(YELLOW_PTS)} />
          <path d="M375 454q25-12 45 4l60 18 24 4-15 6-30-2-50-22z" fill={GREEN} />
          <DotLayer color={ORANGE} d={dots(ORANGE_PTS)} />
        </g>
        {/* place names */}
        <g fill="#f3f3f3" fillOpacity=".75">
          <path d="M59 122h123v27H59zM276 92h126v27H276zM30 201h103v27H30zM167 274h79v27h-79zM0 40h10v28H0zM0 147h20v28H0zM640 246h69v20h-69z" />
          <path d="M2 342h255v19H2z" fill="#fbfbfb" />
        </g>
        <g className="font-['Noto_Sans',sans-serif] text-[17.500px] font-normal" fill="#262626">
          <text x="60" y="140" textLength="119">Tachikawa Shi</text>
          <text x="278.500" y="107" textLength="120">Nishitokyo Shi</text>
          <text x="33" y="220" textLength="97">Hachioji Shi</text>
          <text x="169.500" y="287" textLength="75">Tama Shi</text>
          <text x="8" y="54.500" textAnchor="end">hi</text>
          <text x="19.500" y="153" textAnchor="end">Shi</text>
          <text x="642" y="260" textLength="63">Koto Ku</text>
        </g>
        <text x="5.500" y="358" textLength="247" className="font-['Liberation_Sans',sans-serif] text-[16px]" fill="#6b6b6b">© 2024 Mapbox © OpenStreetMap</text>
      </g>
      <path d="M.5.5h784v365H.5z" fill="none" stroke="#e2e2e2" />
    </svg>
  );
}

/* ---------- charts ---------- */

const HOOD_TOPS = [
  282, 384, 516, 525, 543, 546, 549, 555, 576, 588, 591, 600, 600, 606, 612, 612, 615, 627, 636, 639, 642, 642, 642, 645, 648, 660, 660, 669, 672, 675, 678, 681, 681,
  696, 696, 699, 705, 708, 708, 714, 717, 735, 768, 771, 774, 774, 774,
];
const HOODS: [string, number][] = [
  ["Chiyoda Ku", 91], ["Edogawa Ku", 102], ["Minato Ku", 84], ["Shibuya Ku", 91], ["Tachikawa Shi", 119], ["Katsushika Ku", 117], ["Meguro Ku", 89], ["Toshima Ku", 95],
  ["Setagaya Ku", 103], ["Mitaka Shi", 88], ["Komae Shi", 86], ["Bunkyo Ku", 87], ["Suginami Ku", 103], ["Musashino Shi", 120], ["Chofu Shi", 78], ["Ome Shi", 67],
  ["Kodaira Shi", 94], ["Hamura Shi", 96], ["Nerima Ku", 86], ["Fuchu Shi", 79], ["Hino Shi", 68], ["Akishima Shi", 107], ["Kunitachi Shi", 109],
];

function hoodColor(i: number) {
  if (i === 0) return RED;
  if (i === 1) return ORANGE;
  if (i < 9) return YELLOW;
  return i < 30 ? GREEN : DARK;
}

function HoodChart() {
  return (
    <svg viewBox="491 552 785 348" className="h-[348px] w-[785px] shrink-0 font-['Noto_Sans',sans-serif]">
      <path d="M576 610.500h699M576 660.500h699M576 711.500h699M580.500 575v187M576 761.500h700" stroke="#f0f0f0" fill="none" />
      <text x="928" y="572" textAnchor="middle" textLength="211" fill="#333" className="text-[17px] font-semibold">Neighbourhood Cleansed</text>
      <g fill="#6c6c6c" className="text-[18px] font-light" textAnchor="end">
        <text x="573" y="616.500">60K</text>
        <text x="573" y="666.500">40K</text>
        <text x="573" y="717.500">20K</text>
        <text x="573" y="755">0K</text>
      </g>
      {HOOD_TOPS.map((t, i) => {
        const x = Math.round(582 + i * 14.81);
        const y = Math.round(490 + t / 3);
        return <rect key={i} x={x} y={y} width="11" height={761 - y} fill={hoodColor(i)} />;
      })}
      <path d={HOOD_TOPS.map((_, i) => `M${Math.round(580 + i * 14.81) + 0.5} 762v3`).join("")} stroke="#e6e6e6" />
      {HOODS.map(([name, len], i) => (
        <text key={name} transform={`translate(${(607.5 + i * 29.62).toFixed(1)} 768) rotate(-90)`} textAnchor="end" textLength={len} fill="#666" className="text-[17.500px] font-light">
          {name}
        </text>
      ))}
      <text transform="translate(517 708) rotate(-90)" textLength="83" fill="#333" className="text-[17px] font-semibold">Avg. Price</text>
      <path d="M506 619v-10M510 619v-6M513.500 619v-3" stroke="#333" strokeWidth="1.800" />
    </svg>
  );
}

const PRICE_TOPS = [488, 449, 430, 415, 394, 378, 377, 360, 338, 326, 328, 313, 288, 286, 162, 169];
const PER_TOPS = [585, 536, 591, 628, 636, 652, 685, 688, 686, 694, 714, 716, 710, 721, 647, 667];

function AccommodateChart() {
  const x = (i: number) => Math.round(1387 + i * 32.47);
  return (
    <svg viewBox="1284 124 620 798" className="h-[798px] w-[620px] shrink-0 font-['Noto_Sans',sans-serif]">
      <path d="M1379 165.500h523M1379 236.500h523M1379 306.500h523M1379 377.500h523M1379 447.500h523M1379 529.500h523M1379 601.500h523M1379 674.500h523M1379 746.500h523M1379 819.500h523" stroke="#f0f0f0" />
      <path d="M1383.500 124v796M1902.500 124v796M1284 144.500h619M1284 518.500h619M1284 891.500h619" stroke="#c6c6c6" />
      <text x="1643" y="140.500" textAnchor="middle" textLength="129" fill="#333" className="text-[17px] font-semibold">Accommodates</text>
      <g fill="#6c6c6c" className="text-[18px] font-light" textAnchor="end">
        <text x="1376" y="172">100K</text>
        <text x="1376" y="242.500">80K</text>
        <text x="1376" y="313">60K</text>
        <text x="1376" y="384">40K</text>
        <text x="1376" y="454">20K</text>
        <text x="1376" y="512">0K</text>
        <text x="1376" y="538">10K</text>
        <text x="1376" y="608">8K</text>
        <text x="1376" y="681">6K</text>
        <text x="1376" y="753">4K</text>
        <text x="1376" y="826">2K</text>
        <text x="1376" y="885">0K</text>
      </g>
      {PRICE_TOPS.map((t, i) => <rect key={i} x={x(i)} y={t} width="24" height={518 - t} fill={BLUE} />)}
      {PER_TOPS.map((t, i) => <rect key={i} x={x(i)} y={t} width="24" height={891 - t} fill={BLUE} />)}
      <path d={PRICE_TOPS.slice(1).map((_, i) => `M${x(i + 1) - 4.5} 892v4`).join("")} stroke="#e0e0e0" />
      <g fill="#6c6c6c" className="text-[18px] font-light" textAnchor="middle">
        {PRICE_TOPS.map((_, i) => <text key={i} x={x(i) + 12} y="914">{i + 1}</text>)}
      </g>
      <g fill="#333" className="text-[17px] font-semibold">
        <text transform="translate(1310 371.500) rotate(-90)" textLength="83">Avg. Price</text>
        <text transform="translate(1310 808) rotate(-90)" textLength="210">Avg. Price/Accommodate</text>
      </g>
    </svg>
  );
}

/* ---------- bottom tabs ---------- */

function AddTab({ d, frame }: { d: string; frame: string }) {
  return (
    <div className={`flex items-center justify-center border-r border-[#c9c9c9] ${frame}`}>
      <svg viewBox="0 0 17 17" className="mt-[2px] h-[17px] w-[17px]" fill="none" stroke="#666">
        <path d={d} />
        <path d="M12.500 8.500v8M8.500 12.500h8" strokeWidth="1.900" stroke="#555" />
      </svg>
    </div>
  );
}

function BottomTabs() {
  return (
    <footer className="flex h-[42px] w-full whitespace-nowrap border-t border-[#c9c9c9] bg-[#e6e6e6] text-[18px] leading-[45px] text-[#5e5e5e]">
      <div className="flex w-[192px] items-center border-r border-[#c9c9c9] pl-[9px] tracking-[0.32px]">
        <svg viewBox="0 0 9 13" className="mr-[7px] h-[12px] w-2" fill="none" stroke="#666" strokeWidth="1.100">
          <path d="M.6 2.500v8c0 2.400 7 2.400 7 0v-8c0-2.400-7-2.400-7 0zM.6 2.500c0 2.200 7 2.200 7 0" />
        </svg>
        <span className="pt-[2px]">Data Source</span>
      </div>
      <div className="w-[225px] border-r border-[#c9c9c9] pl-[9px] tracking-[0.3px]">Price Per Neighborhood</div>
      <div className="w-[105px] border-r border-[#c9c9c9] pl-[8px] tracking-[0.2px]">Price Map</div>
      <div className="w-[265px] border-r border-[#c9c9c9] pl-[8px] tracking-[0.25px]">Price Map Per Neighborhood</div>
      <div className="w-[227px] border-r border-[#c9c9c9] pl-[9px] tracking-[0.3px]">Price per Accommodate</div>
      <div className="w-[276px] border-r border-[#c9c9c9] pl-[8px] tracking-[0.35px]">ID Counts per Accommodates</div>
      <div className="flex w-[148px] items-center border-r border-[#c9c9c9] bg-[#fafafa] pl-[10px] font-bold tracking-[0.55px] text-[#555]">
        <svg viewBox="0 0 12 12" className="mr-[5px] h-[12px] w-[12px]" fill="none" stroke="#666">
          <path d="M.5 .5h11v10.500H.5zM6 .5v10.500M.5 5.700h11" />
        </svg>
        <span className="pt-[2px]">Dashboard 1</span>
      </div>
      <AddTab frame="w-[32px]" d="M7 12.500H1.500V2.500h11V7M4.500 10V8M6.500 10V6M8.500 10V7" />
      <AddTab frame="w-[32px]" d="M7 12.500H1.500V2.500h11V7M6.500 2.500v10M1.500 7.500h11" />
      <AddTab frame="w-[32px]" d="M6.500 13l-5-1.500V2.500c2 0 3.500.5 5 1.500 1.500-1 3-1.500 5-1.500v5M6.500 4v9" />
    </footer>
  );
}

export default function App() {
  return (
    <div className="flex h-[976px] w-[1915px] flex-col overflow-hidden bg-[#f5f5f5] font-['Roboto',sans-serif]">
      <Toolbar />
      <div className="flex h-[879px]">
        <Sidebar />
        <main className="relative mb-[1px] flex grow border-2 border-[#527596] bg-white">
          <CountsPanel />
          <div className="flex w-[793px] shrink-0 flex-col">
            <h1 className="h-[67px] pl-[5px] pt-[15px] font-['Noto_Sans',sans-serif] text-[30px] font-light leading-[42px] tracking-[0.1px] text-[#2b2b2b]">Price Map Per Neighborhood</h1>
            <MapView />
            <h1 className="h-[62px] pl-[5px] pt-[13px] font-['Noto_Sans',sans-serif] text-[30px] font-light leading-[42px] tracking-[0.15px] text-[#2b2b2b]">Price Per Neighborhood</h1>
            <HoodChart />
          </div>
          <div className="flex flex-col">
            <h1 className="h-[67px] pl-[4px] pt-[15px] font-['Noto_Sans',sans-serif] text-[30px] font-light leading-[42px] tracking-[0.3px] text-[#2b2b2b]">Price per Accommodate</h1>
            <AccommodateChart />
          </div>
          <div className="absolute -left-[2px] -top-[2px] flex h-[42px] w-[20px] flex-col items-center justify-between rounded-br-[3px] bg-[#46688a]/90 pb-[8px] pt-[5px]">
            <svg viewBox="0 0 10 10" className="h-[10px] w-[10px]" stroke="#fff" strokeWidth="1.300"><path d="M0 0l10 10M10 0L0 10" /></svg>
            <svg viewBox="0 0 8 5" className="h-[5px] w-2"><path d="M.5 0h7L4 4z" fill="#fff" /></svg>
          </div>
          <div className="absolute left-[775px] top-0 flex h-[11px] w-[50px] flex-col items-center gap-[3px] rounded-b-[2px] bg-[#527596] pt-[3px]">
            <div className="h-px w-10 bg-white" />
            <div className="h-px w-10 bg-white" />
          </div>
        </main>
      </div>
      <BottomTabs />
    </div>
  );
}
